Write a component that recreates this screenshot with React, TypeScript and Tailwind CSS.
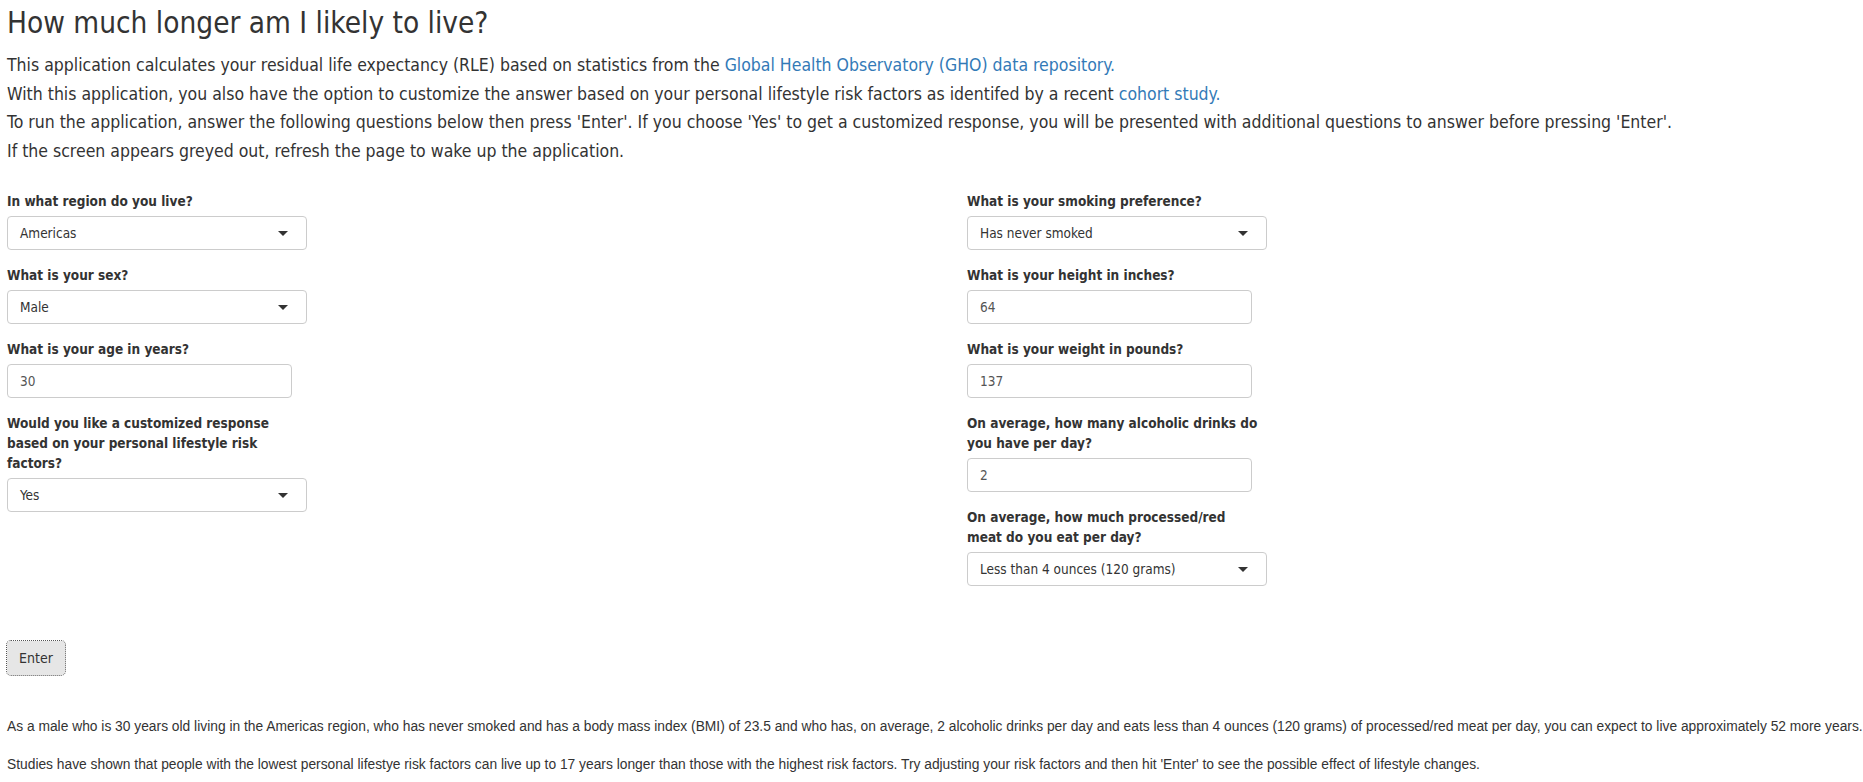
import React from 'react';

const body = '"DejaVu Sans Condensed", "DejaVu Sans", sans-serif';

const SelectBox: React.FC<{ value: string }> = ({ value }) => (
  <div className="flex h-[34px] w-[300px] items-center justify-between rounded-[4px] border border-[#cccccc] bg-white pl-3 pr-[18px] text-[13.5px] text-[#333]">
    <span>{value}</span>
    <span className="h-0 w-0 border-x-[5px] border-t-[5px] border-x-transparent border-t-[#333]" />
  </div>
);

const TextBox: React.FC<{ value: string }> = ({ value }) => (
  <div className="flex h-[34px] w-[285px] items-center rounded-[4px] border border-[#cccccc] bg-white px-3 text-[13.5px] text-[#555]">
    {value}
  </div>
);

const Field: React.FC<{ label: string; children: React.ReactNode }> = ({ label, children }) => (
  <div className="mb-[15px]">
    <div className="mb-[5px] w-[294px] text-[13.5px] font-bold leading-[20px] text-[#333]">{label}</div>
    {children}
  </div>
);

export default function App() {
  return (
    <div className="min-h-screen bg-white px-[7px] text-[#333]" style={{ fontFamily: body }}>
      <h2 className="pt-[5px] text-[29.5px] leading-[36px]">How much longer am I likely to live?</h2>

      <div className="mt-[10px] text-[17.5px] leading-[28.5px]">
        <div>
          This application calculates your residual life expectancy (RLE) based on statistics from the{' '}
          <a className="text-[#337ab7]">Global Health Observatory (GHO) data repository.</a>
        </div>
        <div>
          With this application, you also have the option to customize the answer based on your personal lifestyle risk
          factors as identifed by a recent <a className="text-[#337ab7]">cohort study.</a>
        </div>
        <div>
          To run the application, answer the following questions below then press 'Enter'. If you choose 'Yes' to get a
          customized response, you will be presented with additional questions to answer before pressing 'Enter'.
        </div>
        <div>If the screen appears greyed out, refresh the page to wake up the application.</div>
      </div>

      <div className="mt-[26px] flex">
        <div className="w-[960px]">
          <Field label="In what region do you live?">
            <SelectBox value="Americas" />
          </Field>
          <Field label="What is your sex?">
            <SelectBox value="Male" />
          </Field>
          <Field label="What is your age in years?">
            <TextBox value="30" />
          </Field>
          <Field label="Would you like a customized response based on your personal lifestyle risk factors?">
            <SelectBox value="Yes" />
          </Field>
        </div>
        <div>
          <Field label="What is your smoking preference?">
            <SelectBox value="Has never smoked" />
          </Field>
          <Field label="What is your height in inches?">
            <TextBox value="64" />
          </Field>
          <Field label="What is your weight in pounds?">
            <TextBox value="137" />
          </Field>
          <Field label="On average, how many alcoholic drinks do you have per day?">
            <TextBox value="2" />
          </Field>
          <Field label="On average, how much processed/red meat do you eat per day?">
            <SelectBox value="Less than 4 ounces (120 grams)" />
          </Field>
        </div>
      </div>

      <button className="mt-[40px] h-[34px] rounded-[4px] bg-[#e6e6e6] px-3 text-[14px] text-[#333] outline-1 outline-dotted outline-[#555]">
        Enter
      </button>

      <div className="mt-[42px] text-[13.8px] leading-[20px]" style={{ fontFamily: '"Liberation Sans", Arial, sans-serif' }}>
        <p className="whitespace-nowrap">
          As a male who is 30 years old living in the Americas region, who has never smoked and has a body mass index (BMI)
          of 23.5 and who has, on average, 2 alcoholic drinks per day and eats less than 4 ounces (120 grams) of
          processed/red meat per day, you can expect to live approximately 52 more years.
        </p>
        <p className="mt-[18px]">
          Studies have shown that people with the lowest personal lifestye risk factors can live up to 17 years longer than
          those with the highest risk factors. Try adjusting your risk factors and then hit 'Enter' to see the possible
          effect of lifestyle changes.
        </p>
      </div>
    </div>
  );
}
